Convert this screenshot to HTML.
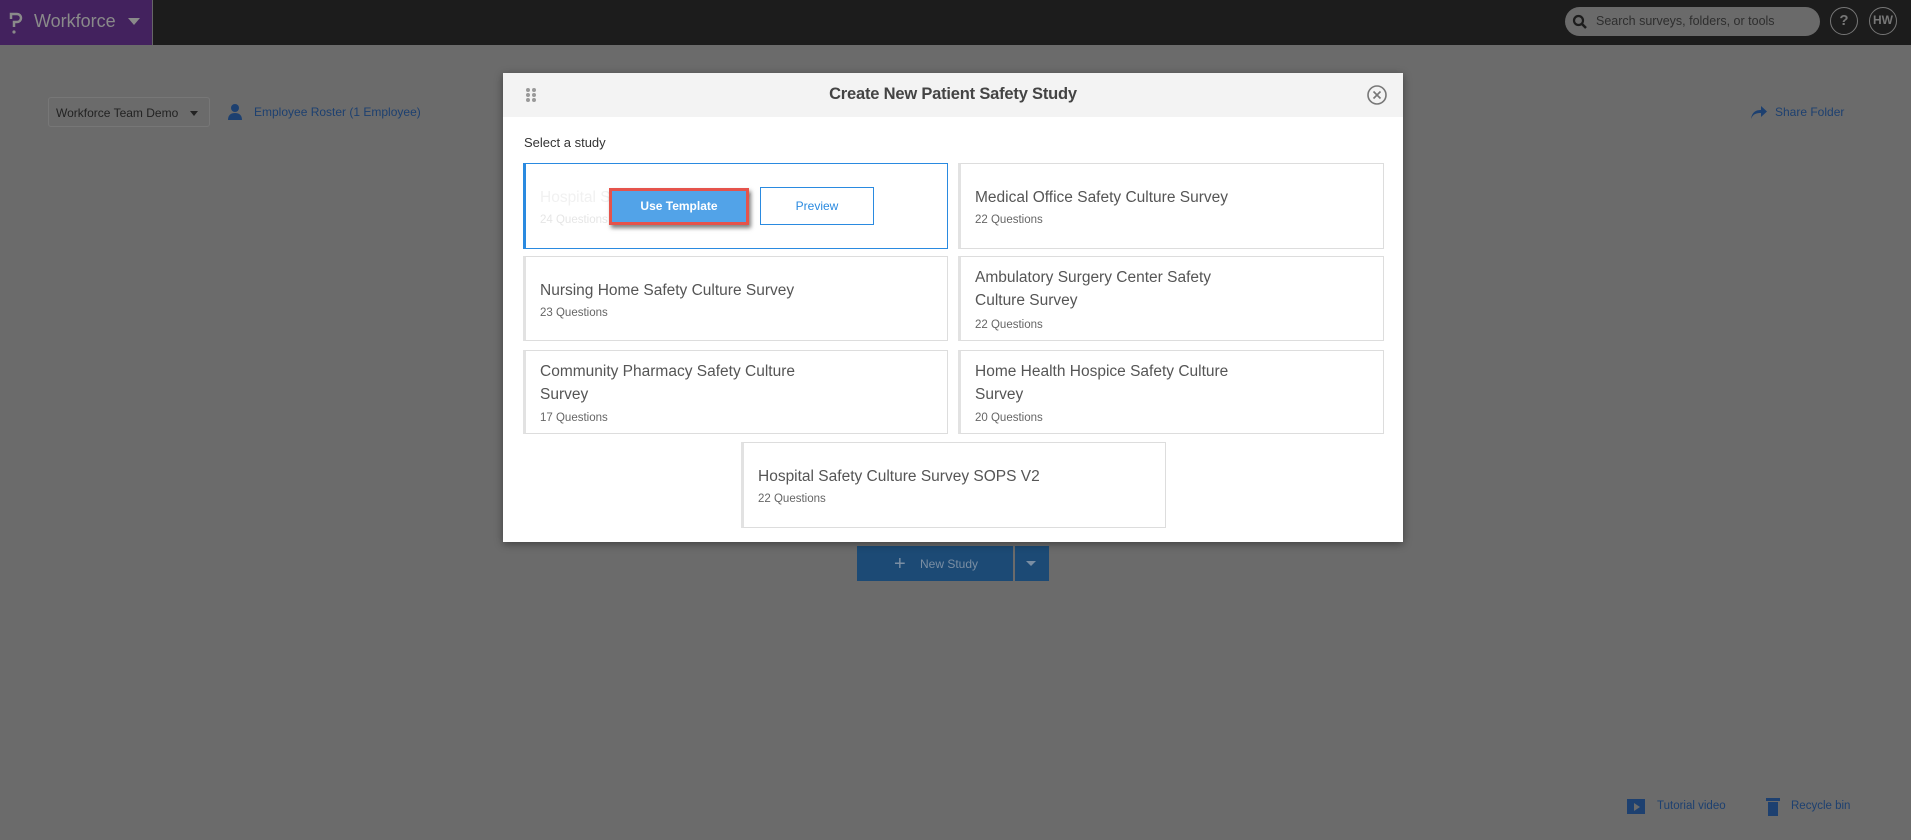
<!DOCTYPE html>
<html><head><meta charset="utf-8"><style>
*{box-sizing:border-box;margin:0;padding:0}
body{width:1911px;height:840px;overflow:hidden;background:#6b6b6b;font-family:"Liberation Sans",sans-serif;position:relative}
.a{position:absolute}
.top{left:0;top:0;width:1911px;height:45px;background:#1c1c1c}
.brand{left:0;top:0;width:153px;height:45px;background:#43225e;border-right:1px solid #666}
.card{position:absolute;background:#fff;border:1px solid #ddd;border-left:3px solid #e2e2e2}
.card .t{position:absolute;left:14px;top:22px;font-size:15.5px;color:#555;line-height:23px;width:265px}
.card .q{position:absolute;left:14px;font-size:11.5px;color:#666}
.link{color:#1d4070;font-size:13px}
</style></head><body>
<div class="a top"></div>
<div class="a brand"></div>
<svg class="a" style="left:8px;top:11px" width="16" height="24" viewBox="0 0 16 24"><path d="M3 8V3h6a4 4 0 0 1 0 8H6v5" fill="none" stroke="#8a8a8a" stroke-width="2.5"/><circle cx="6" cy="21" r="1.6" fill="#8a8a8a"/></svg>
<div class="a" style="left:34px;top:11px;font-size:18px;color:#8a8a8a">Workforce</div>
<div class="a" style="left:128px;top:18px;width:0;height:0;border-left:6px solid transparent;border-right:6px solid transparent;border-top:7px solid #8a8a8a"></div>
<div class="a" style="left:1565px;top:7px;width:255px;height:29px;border-radius:15px;background:#6a6a6a"></div>
<svg class="a" style="left:1572px;top:14px" width="16" height="16" viewBox="0 0 16 16"><circle cx="6.5" cy="6.5" r="4.5" fill="none" stroke="#1c1c1c" stroke-width="2.2"/><path d="M10 10l4 4" stroke="#1c1c1c" stroke-width="2.5"/></svg>
<div class="a" style="left:1596px;top:14px;font-size:12.5px;color:#2e2e2e">Search surveys, folders, or tools</div>
<div class="a" style="left:1830px;top:7px;width:28px;height:28px;border:1.5px solid #777;border-radius:50%;color:#777;font-weight:bold;font-size:15px;text-align:center;line-height:25px">?</div>
<div class="a" style="left:1869px;top:7px;width:28px;height:28px;border:1.5px solid #777;border-radius:50%;color:#777;font-weight:bold;font-size:12px;text-align:center;line-height:25px">HW</div>

<div class="a" style="left:48px;top:97px;width:162px;height:30px;border:1px solid #777;border-radius:3px;"></div>
<div class="a" style="left:56px;top:106px;font-size:12px;color:#222">Workforce Team Demo</div>
<div class="a" style="left:190px;top:111px;border-left:4px solid transparent;border-right:4px solid transparent;border-top:5px solid #222"></div>
<svg class="a" style="left:227px;top:103px" width="16" height="18" viewBox="0 0 16 18"><circle cx="8" cy="5" r="4" fill="#1d4070"/><path d="M1 17c0-5 3-7 7-7s7 2 7 7z" fill="#1d4070"/></svg>
<div class="a link" style="left:254px;top:105px;font-size:12px">Employee Roster (1 Employee)</div>
<svg class="a" style="left:1750px;top:104px" width="18" height="16" viewBox="0 0 18 16"><path d="M1 15C2 8 6 6 11 6V2l6 5.5-6 5.5V9C6 9 3 10 1 15z" fill="#1d4070"/></svg>
<div class="a link" style="left:1775px;top:105px;font-size:12px">Share Folder</div>

<div class="a" style="left:857px;top:546px;width:156px;height:35px;background:#1c4a75"></div>
<div class="a" style="left:1015px;top:546px;width:34px;height:35px;background:#1c4a75"></div>
<div class="a" style="left:894px;top:553px;font-size:20px;color:#7a8ea3">+</div>
<div class="a" style="left:920px;top:557px;font-size:12px;color:#7a8ea3">New Study</div>
<div class="a" style="left:1026px;top:561px;border-left:5px solid transparent;border-right:5px solid transparent;border-top:5px solid #7a8ea3"></div>

<div class="a" style="left:1627px;top:799px;width:18px;height:15px;background:#1d4070"></div>
<div class="a" style="left:1634px;top:803px;border-top:4px solid transparent;border-bottom:4px solid transparent;border-left:6px solid #6b6b6b"></div>
<div class="a link" style="left:1657px;top:800px;font-size:11.5px">Tutorial video</div>
<div class="a" style="left:1766px;top:798px;width:14px;height:3px;background:#1d4070"></div>
<div class="a" style="left:1768px;top:802px;width:10px;height:14px;background:#1d4070"></div>
<div class="a link" style="left:1791px;top:800px;font-size:11.5px">Recycle bin</div>

<div class="a" style="left:503px;top:73px;width:900px;height:469px;background:#fff;box-shadow:0 2px 8px rgba(0,0,0,.4)">
 <div class="a" style="left:0;top:0;width:900px;height:44px;background:#f3f3f3"></div>
 <svg class="a" style="left:22px;top:14px" width="12" height="16"><g fill="#999"><circle cx="3" cy="3" r="2"/><circle cx="9" cy="3" r="2"/><circle cx="3" cy="8" r="2"/><circle cx="9" cy="8" r="2"/><circle cx="3" cy="13" r="2"/><circle cx="9" cy="13" r="2"/></g></svg>
 <div class="a" style="left:0;top:12px;width:900px;text-align:center;font-size:16.5px;color:#444;font-weight:bold;letter-spacing:-0.2px">Create New Patient Safety Study</div>
 <svg class="a" style="left:863px;top:11px" width="22" height="22" viewBox="0 0 22 22"><circle cx="11" cy="11" r="9" fill="none" stroke="#777" stroke-width="1.6"/><path d="M7.5 7.5l7 7M14.5 7.5l-7 7" stroke="#777" stroke-width="1.6"/></svg>
 <div class="a" style="left:21px;top:62px;font-size:13px;color:#333">Select a study</div>
</div>

<div class="card" style="left:523px;top:163px;width:425px;height:86px;border:1px solid #2a8ae0;border-left:3px solid #2a8ae0">
 <div class="t" style="color:#f1f1f1">Hospital Safety Culture Survey</div><div class="q" style="top:50px;color:#e6e6e6">24 Questions</div>
 <div class="a" style="left:83px;top:24px;width:140px;height:37px;background:#52a3e8;border:3px solid #e5534b;box-shadow:2px 3px 4px rgba(0,0,0,.5);color:#fff;font-size:12px;font-weight:bold;text-align:center;line-height:31px">Use Template</div>
 <div class="a" style="left:234px;top:23px;width:114px;height:38px;border:1px solid #2a8ae0;background:#fff;color:#2a8ae0;font-size:12px;text-align:center;line-height:36px">Preview</div>
</div>
<div class="card" style="left:958px;top:163px;width:426px;height:86px"><div class="t">Medical Office Safety Culture Survey</div><div class="q" style="top:50px">22 Questions</div></div>
<div class="card" style="left:523px;top:256px;width:425px;height:85px"><div class="t">Nursing Home Safety Culture Survey</div><div class="q" style="top:50px">23 Questions</div></div>
<div class="card" style="left:958px;top:256px;width:426px;height:85px"><div class="t" style="top:9px">Ambulatory Surgery Center Safety Culture Survey</div><div class="q" style="top:62px">22 Questions</div></div>
<div class="card" style="left:523px;top:350px;width:425px;height:84px"><div class="t" style="top:9px">Community Pharmacy Safety Culture Survey</div><div class="q" style="top:61px">17 Questions</div></div>
<div class="card" style="left:958px;top:350px;width:426px;height:84px"><div class="t" style="top:9px">Home Health Hospice Safety Culture Survey</div><div class="q" style="top:61px">20 Questions</div></div>
<div class="card" style="left:741px;top:442px;width:425px;height:86px"><div class="t" style="width:380px">Hospital Safety Culture Survey SOPS V2</div><div class="q" style="top:50px">22 Questions</div></div>
</body></html>
